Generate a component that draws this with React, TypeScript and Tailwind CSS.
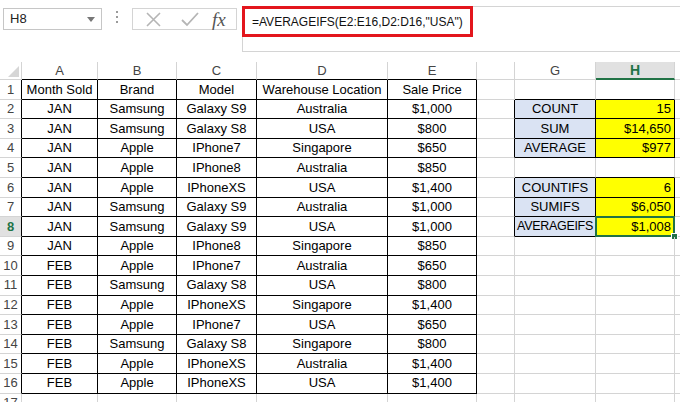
import React from 'react';

type Row = string[];

const data: Row[] = [
  ['Month Sold', 'Brand', 'Model', 'Warehouse Location', 'Sale Price'],
  ['JAN', 'Samsung', 'Galaxy S9', 'Australia', '$1,000'],
  ['JAN', 'Samsung', 'Galaxy S8', 'USA', '$800'],
  ['JAN', 'Apple', 'IPhone7', 'Singapore', '$650'],
  ['JAN', 'Apple', 'IPhone8', 'Australia', '$850'],
  ['JAN', 'Apple', 'IPhoneXS', 'USA', '$1,400'],
  ['JAN', 'Samsung', 'Galaxy S9', 'Australia', '$1,000'],
  ['JAN', 'Samsung', 'Galaxy S9', 'USA', '$1,000'],
  ['JAN', 'Apple', 'IPhone8', 'Singapore', '$850'],
  ['FEB', 'Apple', 'IPhone7', 'Australia', '$650'],
  ['FEB', 'Samsung', 'Galaxy S8', 'USA', '$800'],
  ['FEB', 'Apple', 'IPhoneXS', 'Singapore', '$1,400'],
  ['FEB', 'Apple', 'IPhone7', 'USA', '$650'],
  ['FEB', 'Samsung', 'Galaxy S8', 'Singapore', '$800'],
  ['FEB', 'Apple', 'IPhoneXS', 'Australia', '$1,400'],
  ['FEB', 'Apple', 'IPhoneXS', 'USA', '$1,400'],
];

const summary: Record<number, [string, string]> = {
  2: ['COUNT', '15'],
  3: ['SUM', '$14,650'],
  4: ['AVERAGE', '$977'],
  6: ['COUNTIFS', '6'],
  7: ['SUMIFS', '$6,050'],
  8: ['AVERAGEIFS', '$1,008'],
};

// F and I headers show no letter in the shot
const cols = ['A', 'B', 'C', 'D', 'E', '', 'G', 'H', ''];

function rightBorder(black: boolean) {
  return black ? 'border-r-black' : 'border-r-[#d4d4d4]';
}
function bottomBorder(black: boolean) {
  return black ? 'border-b-black' : 'border-b-[#d4d4d4]';
}

function FormulaBar() {
  return (
    <div className="flex h-[52px] items-start bg-white">
      <div className="ml-[3px] mt-[8px] flex h-[22px] w-[99px] items-center justify-between border border-[#c6c6c6] pl-[6px] pr-[6px] text-[13px] text-[#222]">
        <span>H8</span>
        <svg width="8" height="5" viewBox="0 0 8 5">
          <path d="M0 0 L8 0 L4 5 Z" fill="#777" />
        </svg>
      </div>
      <div className="mt-[11px] ml-[12px] flex w-[5px] flex-col items-center gap-[3px]">
        <span className="h-[2px] w-[2px] bg-[#9a9a9a]" />
        <span className="h-[2px] w-[2px] bg-[#9a9a9a]" />
        <span className="h-[2px] w-[2px] bg-[#9a9a9a]" />
      </div>
      <div className="ml-[13px] mt-[8px] flex h-[22px] w-[105px] items-center border border-[#d4d4d4]">
        <svg className="ml-[13px]" width="15" height="15" viewBox="0 0 15 15">
          <path d="M1 1 L14 14 M14 1 L1 14" stroke="#b5b5b5" strokeWidth="1.6" />
        </svg>
        <svg className="ml-[20px]" width="18" height="15" viewBox="0 0 18 15">
          <path d="M1 8 L6 13 L17 1" stroke="#b5b5b5" strokeWidth="1.8" fill="none" />
        </svg>
        <span className="ml-[13px] font-['Liberation_Serif',serif] text-[19px] italic leading-none text-[#555]">
          fx
        </span>
      </div>
      <div className="ml-[5px] mt-[6px] h-[46px] flex-1 border border-r-0 border-[#d4d4d4]">
        <div className="-ml-px -mt-px flex h-[31px] w-[231px] items-center border-[3px] border-[#e3161d] pl-[7px] text-[12px] text-[#111]">
          =AVERAGEIFS(E2:E16,D2:D16,"USA")
        </div>
      </div>
    </div>
  );
}

function HeaderRow() {
  return (
    <>
      <div className="flex items-end justify-end border-r border-b border-[#d4d4d4] bg-white pr-[2px] pb-[2px]">
        <svg width="11" height="11" viewBox="0 0 11 11">
          <path d="M11 0 L11 11 L0 11 Z" fill="#d6d6d6" />
        </svg>
      </div>
      {cols.map((c, i) =>
        c === 'H' ? (
          <div
            key={i}
            className="flex items-center justify-center border-r border-r-[#d4d4d4] border-b-2 border-b-[#217346] bg-[#e1e1e1] text-[14px] font-bold text-[#217346]"
          >
            {c}
          </div>
        ) : (
          <div
            key={i}
            className={`flex items-center justify-center border-r border-b border-r-[#d4d4d4] ${bottomBorder(i < 5)} bg-white text-[13px] text-[#444]`}
          >
            {c}
          </div>
        )
      )}
    </>
  );
}

function SheetRow({ r }: { r: number }) {
  const inTable = r >= 1 && r <= 16;
  const row = data[r - 1];
  const sum = summary[r];
  const boxRow = sum !== undefined;
  const selected = r === 8;
  return (
    <>
      <div
        className={`flex items-center justify-center border-r border-b border-b-[#d4d4d4] ${rightBorder(inTable)} ${
          selected ? 'bg-[#e1e1e1] font-bold text-[#217346]' : 'bg-white text-[#444]'
        } text-[13px]`}
      >
        {r}
      </div>
      {[0, 1, 2, 3, 4].map((i) => (
        <div
          key={i}
          className={`flex items-center justify-center overflow-hidden whitespace-nowrap border-r border-b ${rightBorder(inTable)} ${bottomBorder(inTable)} text-black`}
        >
          {row ? row[i] : ''}
        </div>
      ))}
      <div className={`border-r border-b border-b-[#d4d4d4] ${rightBorder(boxRow)}`} />
      <div
        className={`flex items-center justify-center overflow-hidden whitespace-nowrap border-r border-b ${rightBorder(boxRow)} ${bottomBorder(r <= 8)} ${
          boxRow ? 'bg-[#dae3f3]' : ''
        } ${selected ? 'text-[12.5px] tracking-[-0.3px]' : ''} text-black`}
      >
        {sum ? sum[0] : ''}
      </div>
      <div
        className={`relative flex items-center justify-end border-r border-b pr-[3px] ${rightBorder(boxRow)} ${bottomBorder(r <= 8)} ${
          boxRow ? 'bg-[#ffff00]' : ''
        } text-black`}
      >
        {sum ? sum[1] : ''}
        {selected && (
          <>
            <div className="absolute -top-px -left-px -right-px -bottom-px border-2 border-[#217346]" />
            <div className="absolute -right-[4px] -bottom-[4px] h-[7px] w-[7px] border border-white bg-[#217346]" />
          </>
        )}
      </div>
      <div className="border-r border-b border-[#d4d4d4]" />
    </>
  );
}

export default function App() {
  const rows = Array.from({ length: 17 }, (_, i) => i + 1);
  return (
    <div className="h-[402px] w-[680px] overflow-hidden bg-white font-['Liberation_Sans',Arial,sans-serif] text-[13px]">
      <FormulaBar />
      <div className="h-[10px]" />
      <div className="grid grid-cols-[22px_76px_79px_80px_131px_89px_38px_81px_79px_80px] grid-rows-[18px_repeat(17,19.6px)]">
        <HeaderRow />
        {rows.map((r) => (
          <SheetRow key={r} r={r} />
        ))}
      </div>
    </div>
  );
}
